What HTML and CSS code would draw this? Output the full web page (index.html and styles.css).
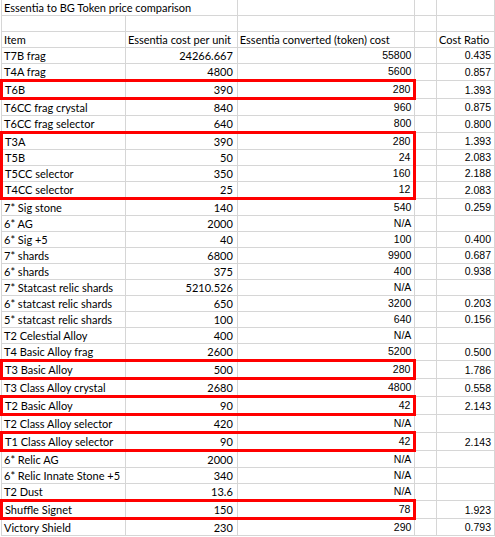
FILE: index.html
```html
<!DOCTYPE html>
<html>
<head>
<meta charset="utf-8">
<link rel="stylesheet" href="styles.css">
</head>
<body>
<table class="sheet">
<colgroup><col class="c-a"><col class="c-b"><col class="c-c"><col class="c-d"><col class="c-e"></colgroup>
<tbody>
<tr><td colspan="2">Essentia to BG Token price comparison</td><td></td><td></td><td></td></tr>
<tr><td></td><td></td><td></td><td></td><td></td></tr>
<tr><td>Item</td><td>Essentia cost per unit</td><td>Essentia converted (token) cost</td><td></td><td>Cost Ratio</td></tr>
<tr><td>T7B frag</td><td class="num">24266.667</td><td class="calc">55800</td><td></td><td class="calc">0.435</td></tr>
<tr><td>T4A frag</td><td class="num">4800</td><td class="calc">5600</td><td></td><td class="calc">0.857</td></tr>
<tr class="boxed box-top box-bottom"><td>T6B</td><td class="num">390</td><td class="calc">280</td><td></td><td class="calc">1.393</td></tr>
<tr><td>T6CC frag crystal</td><td class="num">840</td><td class="calc">960</td><td></td><td class="calc">0.875</td></tr>
<tr><td>T6CC frag selector</td><td class="num">640</td><td class="calc">800</td><td></td><td class="calc">0.800</td></tr>
<tr class="boxed box-top"><td>T3A</td><td class="num">390</td><td class="calc">280</td><td></td><td class="calc">1.393</td></tr>
<tr class="boxed"><td>T5B</td><td class="num">50</td><td class="calc">24</td><td></td><td class="calc">2.083</td></tr>
<tr class="boxed"><td>T5CC selector</td><td class="num">350</td><td class="calc">160</td><td></td><td class="calc">2.188</td></tr>
<tr class="boxed box-bottom"><td>T4CC selector</td><td class="num">25</td><td class="calc">12</td><td></td><td class="calc">2.083</td></tr>
<tr><td>7* Sig stone</td><td class="num">140</td><td class="calc">540</td><td></td><td class="calc">0.259</td></tr>
<tr><td>6* AG</td><td class="num">2000</td><td class="calc">N/A</td><td></td><td></td></tr>
<tr><td>6* Sig +5</td><td class="num">40</td><td class="calc">100</td><td></td><td class="calc">0.400</td></tr>
<tr><td>7* shards</td><td class="num">6800</td><td class="calc">9900</td><td></td><td class="calc">0.687</td></tr>
<tr><td>6* shards</td><td class="num">375</td><td class="calc">400</td><td></td><td class="calc">0.938</td></tr>
<tr><td>7* Statcast relic shards</td><td class="num">5210.526</td><td class="calc">N/A</td><td></td><td></td></tr>
<tr><td>6* statcast relic shards</td><td class="num">650</td><td class="calc">3200</td><td></td><td class="calc">0.203</td></tr>
<tr><td>5* statcast relic shards</td><td class="num">100</td><td class="calc">640</td><td></td><td class="calc">0.156</td></tr>
<tr><td>T2 Celestial Alloy</td><td class="num">400</td><td class="calc">N/A</td><td></td><td></td></tr>
<tr><td>T4 Basic Alloy frag</td><td class="num">2600</td><td class="calc">5200</td><td></td><td class="calc">0.500</td></tr>
<tr class="boxed box-top box-bottom"><td>T3 Basic Alloy</td><td class="num">500</td><td class="calc">280</td><td></td><td class="calc">1.786</td></tr>
<tr><td>T3 Class Alloy crystal</td><td class="num">2680</td><td class="calc">4800</td><td></td><td class="calc">0.558</td></tr>
<tr class="boxed box-top box-bottom"><td>T2 Basic Alloy</td><td class="num">90</td><td class="calc">42</td><td></td><td class="calc">2.143</td></tr>
<tr><td>T2 Class Alloy selector</td><td class="num">420</td><td class="calc">N/A</td><td></td><td></td></tr>
<tr class="boxed box-top box-bottom"><td>T1 Class Alloy selector</td><td class="num">90</td><td class="calc">42</td><td></td><td class="calc">2.143</td></tr>
<tr><td>6* Relic AG</td><td class="num">2000</td><td class="calc">N/A</td><td></td><td></td></tr>
<tr><td>6* Relic Innate Stone +5</td><td class="num">340</td><td class="calc">N/A</td><td></td><td></td></tr>
<tr><td>T2 Dust</td><td class="num">13.6</td><td class="calc">N/A</td><td></td><td></td></tr>
<tr class="boxed box-top box-bottom"><td>Shuffle Signet</td><td class="num">150</td><td class="calc">78</td><td></td><td class="calc">1.923</td></tr>
<tr><td>Victory Shield</td><td class="num">230</td><td class="calc">290</td><td></td><td class="calc">0.793</td></tr>
</tbody>
</table>
</body>
</html>
```
FILE: styles.css
```css
html, body {
  margin: 0;
  padding: 0;
  background: #ffffff;
}

.sheet {
  border-collapse: collapse;
  table-layout: fixed;
  font-family: "Lato", "Liberation Sans", sans-serif;
  font-size: 11px;
  color: #000000;
}

.c-a { width: 124px; }
.c-b { width: 112px; }
.c-c { width: 178px; }
.c-d { width: 22px; }
.c-e { width: 58px; }

.sheet td {
  border: 1px solid #d6d6d6;
  border-top: none;
  height: 13px;
  padding: 1px 2px 1px 2px;
  line-height: 13px;
  vertical-align: bottom;
  white-space: nowrap;
  overflow: hidden;
  text-align: left;
}

.sheet td.num {
  text-align: right;
  padding-right: 4px;
}

.sheet td.calc {
  text-align: right;
  font-family: "Liberation Sans", Arial, sans-serif;
  font-size: 10.5px;
  padding-right: 3px;
}

.boxed td:nth-child(1) { border-left: 3px solid #ff0000; }
.boxed td:nth-child(3) { border-right: 3px solid #ff0000; }
.box-top td:nth-child(-n+3) { border-top: 3px solid #ff0000; }
.box-bottom td:nth-child(-n+3) { border-bottom: 3px solid #ff0000; }
```
